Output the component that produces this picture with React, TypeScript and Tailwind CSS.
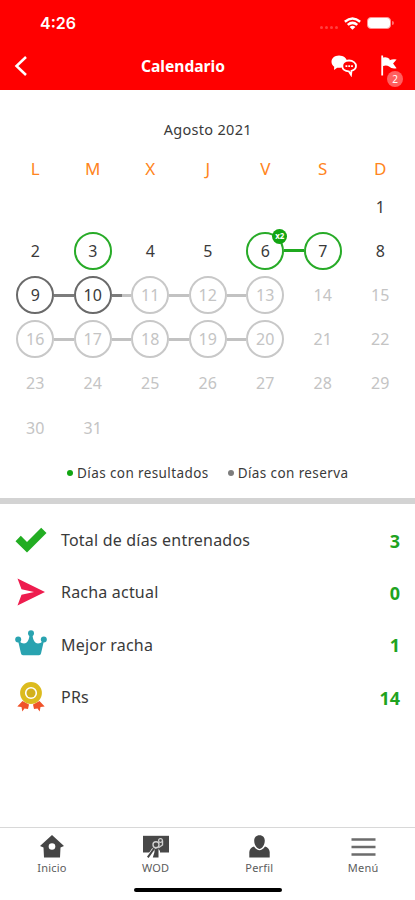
import clsx from "clsx";

type Tone = "green" | "dark" | "light";

interface Day {
    n: number;
    ring?: Tone;
    left?: Tone;
    right?: Tone;
    muted?: boolean;
    badge?: string;
}

const WEEKDAYS = ["L", "M", "X", "J", "V", "S", "D"];

const WEEKS: (Day | null)[][] = [
    [null, null, null, null, null, null, { n: 1 }],
    [
        { n: 2 },
        { n: 3, ring: "green" },
        { n: 4 },
        { n: 5 },
        { n: 6, ring: "green", right: "green", badge: "x2" },
        { n: 7, ring: "green", left: "green" },
        { n: 8 }
    ],
    [
        { n: 9, ring: "dark", right: "dark" },
        { n: 10, ring: "dark", left: "dark", right: "dark" },
        { n: 11, ring: "light", left: "light", right: "light", muted: true },
        { n: 12, ring: "light", left: "light", right: "light", muted: true },
        { n: 13, ring: "light", left: "light", muted: true },
        { n: 14, muted: true },
        { n: 15, muted: true }
    ],
    [
        { n: 16, ring: "light", right: "light", muted: true },
        { n: 17, ring: "light", left: "light", right: "light", muted: true },
        { n: 18, ring: "light", left: "light", right: "light", muted: true },
        { n: 19, ring: "light", left: "light", right: "light", muted: true },
        { n: 20, ring: "light", left: "light", muted: true },
        { n: 21, muted: true },
        { n: 22, muted: true }
    ],
    [23, 24, 25, 26, 27, 28, 29].map(n => ({ n, muted: true })),
    [{ n: 30, muted: true }, { n: 31, muted: true }, null, null, null, null, null]
];

const lineColor: Record<Tone, string> = {
    green: "bg-[#1fa91f]",
    dark: "bg-[#7c7c7c]",
    light: "bg-[#c2c2c2]"
};

const ringColor: Record<Tone, string> = {
    green: "border-[#28ab28]",
    dark: "border-[#6a6a6a]",
    light: "border-[#c8c8c8]"
};

function DayCell({ day }: { day: Day | null }) {
    if (!day) return <div />;
    return (
        <div className="flex items-center">
            <div className={clsx("h-[3px] flex-1", day.left && lineColor[day.left])} />
            <div
                className={clsx(
                    "relative flex h-[38px] w-[38px] items-center justify-center rounded-full border-[2px] text-[16px]",
                    day.ring ? ringColor[day.ring] : "border-transparent",
                    day.muted ? "text-[#c4c4c4]" : "text-[#3a3a3a]"
                )}
            >
                {day.n}
                {day.badge && (
                    <span className="absolute -top-[5px] -right-[5px] flex h-[15px] w-[15px] items-center justify-center rounded-full bg-[#12a512] text-[8px] font-bold text-white">
                        {day.badge}
                    </span>
                )}
            </div>
            <div className={clsx("h-[3px] flex-1", day.right && lineColor[day.right])} />
        </div>
    );
}

function CheckIcon() {
    return (
        <svg width="32" height="26" viewBox="0 0 32 26" fill="#22ad22">
            <path d="M0.5 14.2 5.8 8.8 12 15 26.2 0.8 31.5 6 12 25.4Z" />
        </svg>
    );
}

function SendIcon() {
    return (
        <svg width="28" height="28" viewBox="0 0 28 28" fill="#ee1c4e">
            <path d="M0.5 0.5 28 14 0.5 27.5 4.5 16.8 17 14 4.5 11.2Z" />
        </svg>
    );
}

function CrownIcon() {
    return (
        <svg className="-mt-1" width="32" height="26" viewBox="0 0 32 26" fill="#29a3b0">
            <circle cx="16" cy="3.3" r="3" />
            <circle cx="3.2" cy="9.5" r="3" />
            <circle cx="28.800" cy="9.5" r="3" />
            <path d="M3 10.500q4.500 4 8 2.500 3-2 3.500-8h3q.5 6 3.500 8 3.500 1.500 8-2.500L26 23.500q-.3 1.800-2 1.800H8q-1.700 0-2-1.800Z" />
        </svg>
    );
}

function MedalIcon() {
    return (
        <svg width="28" height="30" viewBox="0 0 28 30">
            <path d="M5.500 19 .3 24.500l4.200.5.8 4.500 2.200-3 3.500.5 1-4.500Z" fill="#f0532a" />
            <path d="M22.500 19 27.700 24.500l-4.200.5-.8 4.500-2.200-3-3.500.5-1-4.500Z" fill="#f0532a" />
            <circle cx="14" cy="11" r="8.500" fill="#fff" stroke="#dcbb1e" strokeWidth="4.800" />
            <circle cx="14" cy="11" r="4.500" fill="#d2b01c" />
        </svg>
    );
}

const STATS = [
    { label: "Total de días entrenados", value: 3, icon: <CheckIcon /> },
    { label: "Racha actual", value: 0, icon: <SendIcon /> },
    { label: "Mejor racha", value: 1, icon: <CrownIcon /> },
    { label: "PRs", value: 14, icon: <MedalIcon /> }
];

const TABS = [
    {
        label: "Inicio",
        icon: (
            <svg width="26" height="23" viewBox="0 0 26 23">
                <path d="M13 0 25 11 21.500 12.500 21 22.500H5L4.500 12.500 1 11Z" fill="#454545" />
                <circle cx="13" cy="11.500" r="3.300" fill="#fff" />
            </svg>
        )
    },
    {
        label: "WOD",
        icon: (
            <svg width="26" height="23" viewBox="0 0 26 23">
                <path d="M0 .8h26v16.700H0Z" fill="#484848" />
                <path d="M9 13.500 2.500 23H17V16L14 12Z" fill="#fff" />
                <path d="M11.500 14 15.500 12.500V22.500H9.800L11.500 17Z" fill="#454545" />
                <path d="M11.500 13 4.800 22.300" stroke="#454545" strokeWidth="2" />
                <g fill="none" stroke="#d0d0d0">
                    <circle cx="13" cy="9.800" r="3" strokeWidth="1.400" />
                    <circle cx="17.500" cy="5.500" r="1.900" strokeWidth="1.200" />
                    <path d="M15.500 12.800 19.500 10V5.500" strokeWidth="1.400" />
                </g>
            </svg>
        )
    },
    {
        label: "Perfil",
        icon: (
            <svg width="21" height="23" viewBox="0 0 21 23" fill="#454545">
                <path d="M.3 22.500V17Q.8 12.500 5 11.500 10.500 19 16 11.500 20.200 12.500 20.700 17V22.500Z" />
                <path d="M10.500.2C7 .2 5.200 2.600 5.200 5.800c0 3 1.300 5.200 2.600 6.700q2.700 2.800 5.400 0c1.300-1.500 2.600-3.700 2.600-6.700C15.800 2.600 14 .2 10.500.2Z" />
            </svg>
        )
    },
    {
        label: "Menú",
        icon: (
            <svg width="25" height="23" viewBox="0 0 25 23" stroke="#6c6c6c" strokeWidth="2.500">
                <path d="M0.500 4.500h24M0.500 12h24M0.500 19.500h24" />
            </svg>
        )
    }
];

function StatusBar() {
    return (
        <div className="flex h-11 items-center justify-between pt-[2px] pr-[21px] pl-10 text-white">
            <span className="font-['Inter'] text-[16px] font-semibold">4:26</span>
            <div className="flex items-center">
                <div className="mt-[8px] mr-[6px] flex gap-[2px]">
                    {[0, 1, 2, 3].map(i => (
                        <span key={i} className="h-[3px] w-[3px] rounded-full bg-[#ff4040]" />
                    ))}
                </div>
                <svg width="17" height="13" viewBox="0 0 16 12" fill="none" stroke="#fff" strokeWidth="2.300">
                    <path d="M.8 4.300Q8-1.700 15.200 4.300M3.500 7.300Q8 3.500 12.500 7.300" />
                    <path d="M8 11.800 5.300 9.200Q8 7 10.700 9.200Z" fill="#fff" stroke="none" />
                </svg>
                <div className="ml-[6px] h-[12px] w-[24px] rounded-[4px] border border-[#ff9090] bg-white" />
                <span className="ml-px h-1 w-[2px] rounded-r bg-[#ff7070]" />
            </div>
        </div>
    );
}

function NavBar() {
    return (
        <div className="grid h-[44px] grid-cols-[90px_1fr_139px] items-center text-white">
            <svg className="ml-[14px]" width="14" height="22" viewBox="0 0 14 22" fill="none" stroke="#fff" strokeWidth="2.500">
                <path d="M12 2 2.500 11 12 20" />
            </svg>
            <h1 className="pt-[2px] text-center text-[15.600px] leading-none font-bold whitespace-nowrap">Calendario</h1>
            <div className="flex items-start pl-[55px]">
                <svg width="26" height="22" viewBox="0 0 26 22">
                    <path d="M8 .5C3.600.5.500 3.300.500 6.800c0 2 1 3.700 2.700 4.900L3 15l3.200-2.200h3.300C14 12.500 16 10 16 6.800 16 3.300 12.500.500 8 .500Z" fill="#fff" />
                    <path d="M18 5.500c-4 0-6.700 2.400-6.700 5.500s2.700 5.300 6.500 5.300l2.200 3.500.5-4c2.700-.7 4.500-2.500 4.500-4.800C25 8 22 5.500 18 5.500Z" fill="#f00" stroke="#fff" strokeWidth="1.800" />
                    <path d="M14.500 11.200h1.800M17.300 11.200h1.800M20.100 11.200h1.800" stroke="#fff" strokeWidth="1.700" />
                </svg>
                <div className="relative ml-[24px]">
                    <svg width="18" height="22" viewBox="0 0 18 22" fill="#fff">
                        <path d="M.3.500h1.800v20H.3ZM2.100 2.500q4-1 6.500 1.500V5.200q3-1.500 7-.8l-3.500 4 3.500 4.800q-5 1-7.500-1.800-2.500-1.500-6-.5Z" />
                    </svg>
                    <span className="absolute top-[16px] left-[6px] flex h-4 w-4 items-center justify-center rounded-full bg-[#ff5f5f] text-[10px]">
                        2
                    </span>
                </div>
            </div>
        </div>
    );
}

export default function App() {
    return (
        <div className="flex h-[900px] w-[415px] flex-col overflow-hidden bg-white font-['Noto_Sans','Open_Sans',sans-serif] text-[#3a3a3a]">
            <header className="h-[90px] bg-[#ff0000]">
                <StatusBar />
                <NavBar />
            </header>

            <section className="h-[408px] pt-[29px] pr-[6px] pl-[6.500px]">
                <h2 className="text-center text-[14.500px] leading-5 tracking-[0.3px]">Agosto 2021</h2>
                <div className="mt-[19px] grid grid-cols-7 text-center text-[17px] leading-[22px] text-[#ff8420]">
                    {WEEKDAYS.map(d => (
                        <span key={d}>{d}</span>
                    ))}
                </div>
                <div className="mt-[4.600px]">
                    {WEEKS.map((week, i) => (
                        <div key={i} className="grid h-[44.200px] grid-cols-7">
                            {week.map((day, j) => (
                                <DayCell key={j} day={day} />
                            ))}
                        </div>
                    ))}
                </div>
                <div className="mt-[13px] flex justify-center gap-[19px] text-[13.500px] leading-5 tracking-[0.4px]">
                    <span className="flex items-center gap-1">
                        <i className="h-[6px] w-[6px] rounded-full bg-[#12a512]" />
                        Días con resultados
                    </span>
                    <span className="flex items-center gap-1">
                        <i className="h-[6px] w-[6px] rounded-full bg-[#7d7d7d]" />
                        Días con reserva
                    </span>
                </div>
            </section>

            <div className="h-[6px] bg-[#d3d3d3]" />

            <ul className="flex-1 pt-[10px]">
                {STATS.map(s => (
                    <li key={s.label} className="flex h-[52.300px] items-center pr-[15px] pl-[15px]">
                        <span className="flex w-8 justify-center">{s.icon}</span>
                        <span className="ml-[14px] flex-1 text-[16px] tracking-[0.2px]">{s.label}</span>
                        <span className="pt-[2px] text-[18px] font-bold text-[#1fa31f]">{s.value}</span>
                    </li>
                ))}
            </ul>

            <nav className="h-[73px] border-t-[1.500px] border-[#d8d8d8]">
                <div className="grid grid-cols-4 pt-[7px]">
                    {TABS.map(t => (
                        <div key={t.label} className="flex flex-col items-center text-[11px] leading-[20px] tracking-[0.2px] text-[#5c5c5c]">
                            {t.icon}
                            {t.label}
                        </div>
                    ))}
                </div>
                <div className="mx-auto mt-[10px] h-[4px] w-[148px] rounded-full bg-black" />
            </nav>
        </div>
    );
}
